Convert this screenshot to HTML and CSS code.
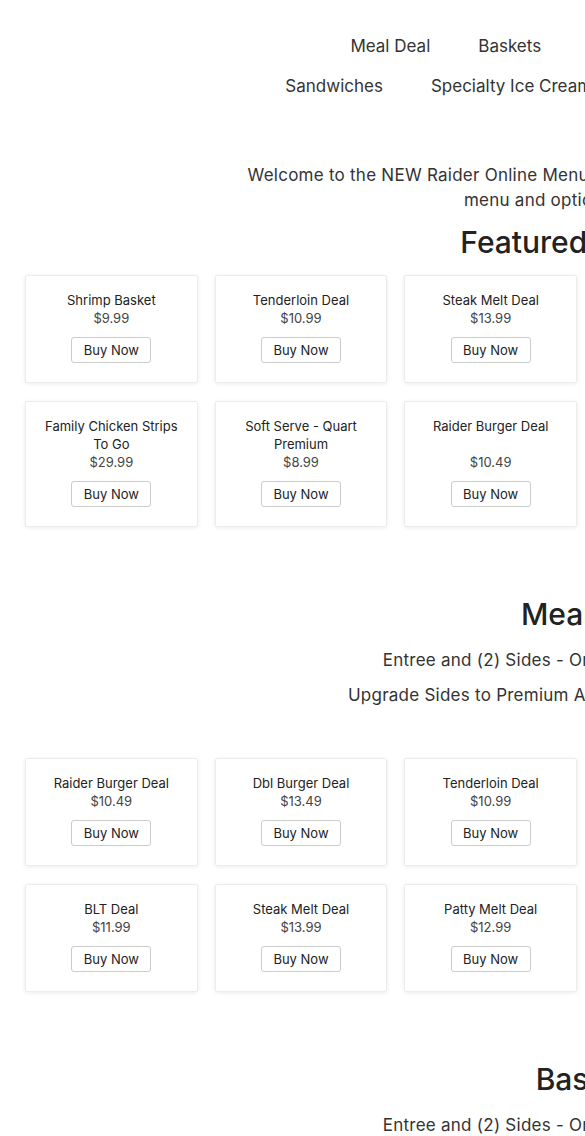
FILE: index.html
```html
<!DOCTYPE html>
<html lang="en">
<head>
    <meta charset="UTF-8">
    <meta name="viewport" content="width=device-width, initial-scale=1.0">
    <title>Raider Online Menu</title>
    <link rel="stylesheet" href="styles.css">
</head>
<body>
    <div class="page">
        <nav class="nav wide">
            <div class="nav-row">
                <a href="#meal-deal">Meal Deal</a>
                <a href="#baskets">Baskets</a>
                <a href="#">Burgers &amp; Dogs</a>
                <a href="#">Desserts</a>
            </div>
            <div class="nav-row">
                <a href="#">Sandwiches</a>
                <a href="#">Specialty Ice Cream</a>
                <a href="#">Shakes &amp; Malts</a>
                <a href="#">Kids Meals</a>
            </div>
        </nav>

        <div class="intro wide">
            <p>Welcome to the NEW Raider Online Menu where you can look through all our newer</p>
            <p>menu and options for ordering!</p>
        </div>

        <h2 class="section-title wide first">Featured Products</h2>
        <div class="grid">
            <div class="card">
                <div class="card-name">Shrimp Basket</div>
                <div class="card-price">$9.99</div>
                <button class="buy">Buy Now</button>
            </div>
            <div class="card">
                <div class="card-name">Tenderloin Deal</div>
                <div class="card-price">$10.99</div>
                <button class="buy">Buy Now</button>
            </div>
            <div class="card">
                <div class="card-name">Steak Melt Deal</div>
                <div class="card-price">$13.99</div>
                <button class="buy">Buy Now</button>
            </div>
            <div class="card">
                <div class="card-name">Family Chicken Strips To Go</div>
                <div class="card-price">$29.99</div>
                <button class="buy">Buy Now</button>
            </div>
            <div class="card">
                <div class="card-name">Soft Serve - Quart Premium</div>
                <div class="card-price">$8.99</div>
                <button class="buy">Buy Now</button>
            </div>
            <div class="card">
                <div class="card-name">Raider Burger Deal</div>
                <div class="card-price">$10.49</div>
                <button class="buy">Buy Now</button>
            </div>
        </div>

        <h2 class="section-title wide" id="meal-deal">Meal Deal</h2>
        <div class="section-text wide">
            <p>Entree and (2) Sides - Order Your Drink Separately</p>
            <p>Upgrade Sides to Premium Appetizers for an Extra $2 Each</p>
        </div>
        <div class="grid">
            <div class="card">
                <div class="card-name">Raider Burger Deal</div>
                <div class="card-price">$10.49</div>
                <button class="buy">Buy Now</button>
            </div>
            <div class="card">
                <div class="card-name">Dbl Burger Deal</div>
                <div class="card-price">$13.49</div>
                <button class="buy">Buy Now</button>
            </div>
            <div class="card">
                <div class="card-name">Tenderloin Deal</div>
                <div class="card-price">$10.99</div>
                <button class="buy">Buy Now</button>
            </div>
            <div class="card">
                <div class="card-name">BLT Deal</div>
                <div class="card-price">$11.99</div>
                <button class="buy">Buy Now</button>
            </div>
            <div class="card">
                <div class="card-name">Steak Melt Deal</div>
                <div class="card-price">$13.99</div>
                <button class="buy">Buy Now</button>
            </div>
            <div class="card">
                <div class="card-name">Patty Melt Deal</div>
                <div class="card-price">$12.99</div>
                <button class="buy">Buy Now</button>
            </div>
        </div>

        <h2 class="section-title wide" id="baskets">Baskets</h2>
        <div class="section-text wide">
            <p>Entree and (2) Sides - Order Your Drink Separately</p>
        </div>
    </div>
</body>
</html>
```

FILE: styles.css
```css
html, body {
    overflow-x: hidden;
}
body {
    margin: 0;
    font-family: Inter, "Noto Sans", sans-serif;
    color: #333;
    background-color: #fff;
}
.page {
    width: 585px;
    overflow: hidden;
}
.wide {
    width: 1184px;
    text-align: center;
}
.nav {
    padding-top: 26px;
}
.nav-row {
    display: flex;
    justify-content: center;
    gap: 48px;
    line-height: 40px;
}
.nav-row a {
    color: #333;
    text-decoration: none;
    font-size: 17px;
    white-space: nowrap;
}
.intro {
    margin-top: 57px;
    font-size: 17px;
    line-height: 25px;
    letter-spacing: 0.25px;
}
.intro p {
    margin: 0;
}
.section-title {
    margin: 69px 0 0;
    font-size: 30px;
    line-height: 36px;
    font-weight: 500;
    color: #222;
}
.section-title.first {
    margin-top: 11px;
}
.section-text {
    margin-top: 16px;
    font-size: 17px;
    line-height: 25px;
    letter-spacing: 0.25px;
}
.section-text p {
    margin: 0 0 10px;
}
.section-text + .grid {
    margin-top: 50px;
}
.grid {
    display: grid;
    grid-template-columns: repeat(3, 1fr);
    gap: 18px 17px;
    margin: 15px 8px 0 25px;
}
.card {
    display: flex;
    flex-direction: column;
    align-items: center;
    padding: 15px 10px 19px;
    border: 1px solid #ececec;
    border-radius: 2px;
    box-shadow: 0 1px 4px rgba(0, 0, 0, 0.08);
    text-align: center;
    font-size: 13px;
    line-height: 18px;
}
.card-name {
    flex: 1;
    color: #222;
}
.card-price {
    color: #444;
}
.buy {
    margin-top: 10px;
    width: 80px;
    height: 26px;
    padding: 0;
    border: 1px solid #ccc;
    border-radius: 3px;
    background-color: #fff;
    color: #222;
    font-family: inherit;
    font-size: 13px;
    cursor: pointer;
}
.buy:hover {
    background-color: #f5f5f5;
}
```
